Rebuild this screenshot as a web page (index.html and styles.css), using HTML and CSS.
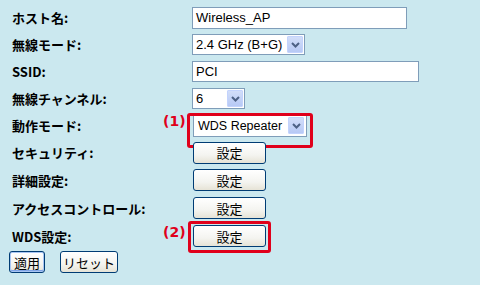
FILE: index.html
```html
<!DOCTYPE html>
<html lang="ja">
<head>
<meta charset="utf-8">
<link rel="stylesheet" href="styles.css">
</head>
<body>
<div class="form">
  <div class="label">ホスト名:</div>
  <div class="ctl"><div class="input w-host">Wireless_AP</div></div>

  <div class="label">無線モード:</div>
  <div class="ctl"><div class="select w-mode"><span class="val">2.4 GHz (B+G)</span><span class="arrow"><svg width="9" height="6" viewBox="0 0 9 6"><path d="M1 1 L4.5 4.5 L8 1" fill="none" stroke="#4d6185" stroke-width="2"/></svg></span></div></div>

  <div class="label">SSID:</div>
  <div class="ctl"><div class="input w-ssid">PCI</div></div>

  <div class="label">無線チャンネル:</div>
  <div class="ctl"><div class="select w-ch"><span class="val">6</span><span class="arrow"><svg width="9" height="6" viewBox="0 0 9 6"><path d="M1 1 L4.5 4.5 L8 1" fill="none" stroke="#4d6185" stroke-width="2"/></svg></span></div></div>

  <div class="label">動作モード:</div>
  <div class="ctl"><span class="note note1">(1)</span><div class="mark mark1"></div><div class="select w-wds"><span class="val">WDS Repeater</span><span class="arrow"><svg width="9" height="6" viewBox="0 0 9 6"><path d="M1 1 L4.5 4.5 L8 1" fill="none" stroke="#4d6185" stroke-width="2"/></svg></span></div></div>

  <div class="label">セキュリティ:</div>
  <div class="ctl"><div class="btn w-set">設定</div></div>

  <div class="label">詳細設定:</div>
  <div class="ctl"><div class="btn w-set">設定</div></div>

  <div class="label">アクセスコントロール:</div>
  <div class="ctl"><div class="btn w-set">設定</div></div>

  <div class="label">WDS設定:</div>
  <div class="ctl"><span class="note note2">(2)</span><div class="mark mark2"></div><div class="btn w-set">設定</div></div>
</div>
<div class="actions">
  <div class="btn default w-apply">適用</div>
  <div class="btn w-reset">リセット</div>
</div>
</body>
</html>
```
FILE: styles.css
```css
html, body {
  margin: 0;
  padding: 0;
  background: #cbe8ef;
  width: 480px;
  height: 285px;
  overflow: hidden;
}
body {
  font-family: "Liberation Sans", "Noto Sans CJK JP", sans-serif;
  color: #000;
}
.form {
  display: grid;
  grid-template-columns: 180px auto;
  grid-template-rows: 27px 27px 27px 27px 27px 27px 28px 28px 28px;
  padding: 4px 0 0 12px;
}
.label {
  display: flex;
  align-items: center;
  font-family: "Noto Sans CJK JP", sans-serif;
  font-weight: bold;
  font-size: 13px;
  white-space: nowrap;
}
.ctl {
  position: relative;
  display: flex;
  align-items: center;
}
.input, .select {
  box-sizing: border-box;
  height: 22px;
  background: #fff;
  border: 1px solid #7f9db9;
  font-family: "Liberation Sans", sans-serif;
  font-size: 13px;
  white-space: nowrap;
  display: flex;
  align-items: center;
}
.input { padding-left: 3px; }
.w-host { width: 215px; }
.w-ssid { width: 227px; height: 21px; }
.select { justify-content: space-between; height: 21px; padding: 1px; }
.select .val { padding-left: 2px; }
.w-mode { width: 113px; }
.w-ch { width: 53px; }
.w-wds { width: 114px; height: 23px; margin-left: 1px; padding: 2px; }
.w-wds .val { padding-left: 2px; font-size: 12.5px; }
.arrow {
  box-sizing: border-box;
  flex: none;
  width: 16px;
  height: 100%;
  background: linear-gradient(#d2def9, #b7c9f5);
  border: 1px solid #c3d3fd;
  border-radius: 1px;
  display: flex;
  align-items: center;
  justify-content: center;
}
.btn {
  box-sizing: border-box;
  height: 22px;
  border: 1px solid #003c74;
  border-radius: 3px;
  background: linear-gradient(#ffffff, #f4f4f0 60%, #e6e3d6);
  font-family: "Noto Sans CJK JP", sans-serif;
  font-size: 13px;
  display: flex;
  align-items: center;
  justify-content: center;
}
.w-set { width: 73px; margin-left: 1px; }
.note {
  position: absolute;
  left: -29px;
  font-family: "DejaVu Sans", sans-serif;
  font-weight: bold;
  font-size: 14px;
  color: #e0001b;
}
.note1 { top: 1px; }
.note2 { top: 2px; }
.mark {
  position: absolute;
  box-sizing: border-box;
  border: 3px solid #e0001b;
  border-radius: 3px;
}
.mark1 { left: -5px; top: 1px; width: 126px; height: 35px; }
.mark2 { left: -4px; top: -1px; width: 83px; height: 32px; }
.actions {
  display: flex;
  gap: 15px;
  padding: 1px 0 0 9px;
}
.w-apply { width: 36px; }
.w-reset { width: 58px; }
.default {
  box-shadow: inset 0 0 0 1px #a9c6f3, inset 0 -1px 0 1px #7fa4e6;
}
```
